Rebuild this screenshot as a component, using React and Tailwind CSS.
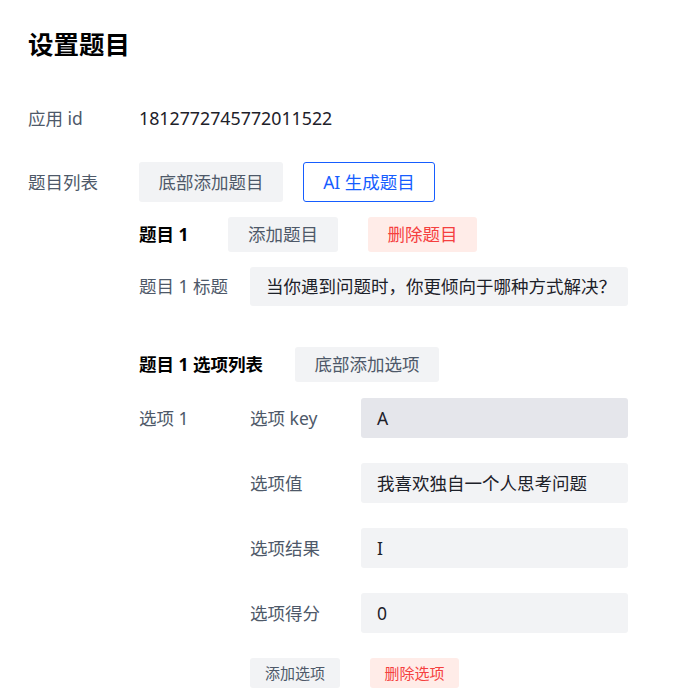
export default function App() {
  const label = "text-[17.5px] text-[#4E5969]";
  const btnGray =
    "flex items-center justify-center rounded-[3px] bg-[#F2F3F5] text-[#4E5969]";
  const btnRed =
    "flex items-center justify-center rounded-[3px] bg-[#FFECE8] text-[#F53F3F]";
  const inputBox =
    "flex items-center whitespace-nowrap overflow-hidden rounded-[3px] px-[16px] text-[17.5px] text-[#1D2129]";
  const optionRows = [
    { k: "选项 key", v: "A", bg: "bg-[#E5E6EB]" },
    { k: "选项值", v: "我喜欢独自一个人思考问题", bg: "bg-[#F2F3F5]" },
    { k: "选项结果", v: "I", bg: "bg-[#F2F3F5]" },
    { k: "选项得分", v: "0", bg: "bg-[#F2F3F5]" },
  ];
  return (
    <div className="min-h-screen bg-white pl-[28px] pt-[26px] font-['Noto_Sans','Noto_Sans_CJK_SC',sans-serif]">
      <h1 className="flex h-[36px] items-center text-[25.5px] font-bold text-black">
        设置题目
      </h1>

      <div className="mt-[36px] flex h-[40px] items-center">
        <div className={`w-[111px] ${label}`}>应用 id</div>
        <div className="text-[17.8px] text-[#1D2129]">1812772745772011522</div>
      </div>

      <div className="mt-[24px] flex">
        <div className={`flex h-[40px] w-[111px] items-center ${label}`}>题目列表</div>
        <div className="flex flex-col">
          <div className="flex h-[40px] gap-[20px]">
            <button className={`${btnGray} h-[40px] w-[144px] text-[17.5px]`}>底部添加题目</button>
            <button className="flex h-[40px] w-[132px] items-center justify-center rounded-[3px] border border-[#165DFF] bg-white text-[17.5px] text-[#165DFF]">
              AI 生成题目
            </button>
          </div>

          <div className="mt-[15px] flex h-[35px] items-center">
            <div className="w-[89px] text-[17.5px] font-bold text-black">题目 1</div>
            <button className={`${btnGray} h-[35px] w-[110px] text-[17.5px]`}>添加题目</button>
            <button className={`${btnRed} ml-[30px] h-[35px] w-[109px] text-[17.5px]`}>删除题目</button>
          </div>

          <div className="mt-[15px] flex">
            <div className={`flex h-[39px] w-[111px] items-center ${label}`}>题目 1 标题</div>
            <div className={`${inputBox} h-[39px] w-[378px] bg-[#F2F3F5]`}>
              当你遇到问题时，你更倾向于哪种方式解决？
            </div>
          </div>

          <div className="mt-[41px] flex h-[35px] items-center">
            <div className="w-[156px] text-[17.5px] font-bold text-black">题目 1 选项列表</div>
            <button className={`${btnGray} h-[35px] w-[144px] text-[17.5px]`}>底部添加选项</button>
          </div>

          <div className="mt-[16px] flex">
            <div className={`flex h-[40px] w-[111px] items-center ${label}`}>选项 1</div>
            <div className="flex flex-col gap-[25px]">
              {optionRows.map((r) => (
                <div key={r.k} className="flex">
                  <div className={`flex h-[40px] w-[111px] items-center ${label}`}>{r.k}</div>
                  <div className={`${inputBox} h-[40px] w-[267px] ${r.bg}`}>{r.v}</div>
                </div>
              ))}
              <div className="flex gap-[30px]">
                <button className={`${btnGray} h-[30px] w-[90px] text-[15px]`}>添加选项</button>
                <button className={`${btnRed} h-[30px] w-[89px] text-[15px]`}>删除选项</button>
              </div>
            </div>
          </div>
        </div>
      </div>
    </div>
  );
}
